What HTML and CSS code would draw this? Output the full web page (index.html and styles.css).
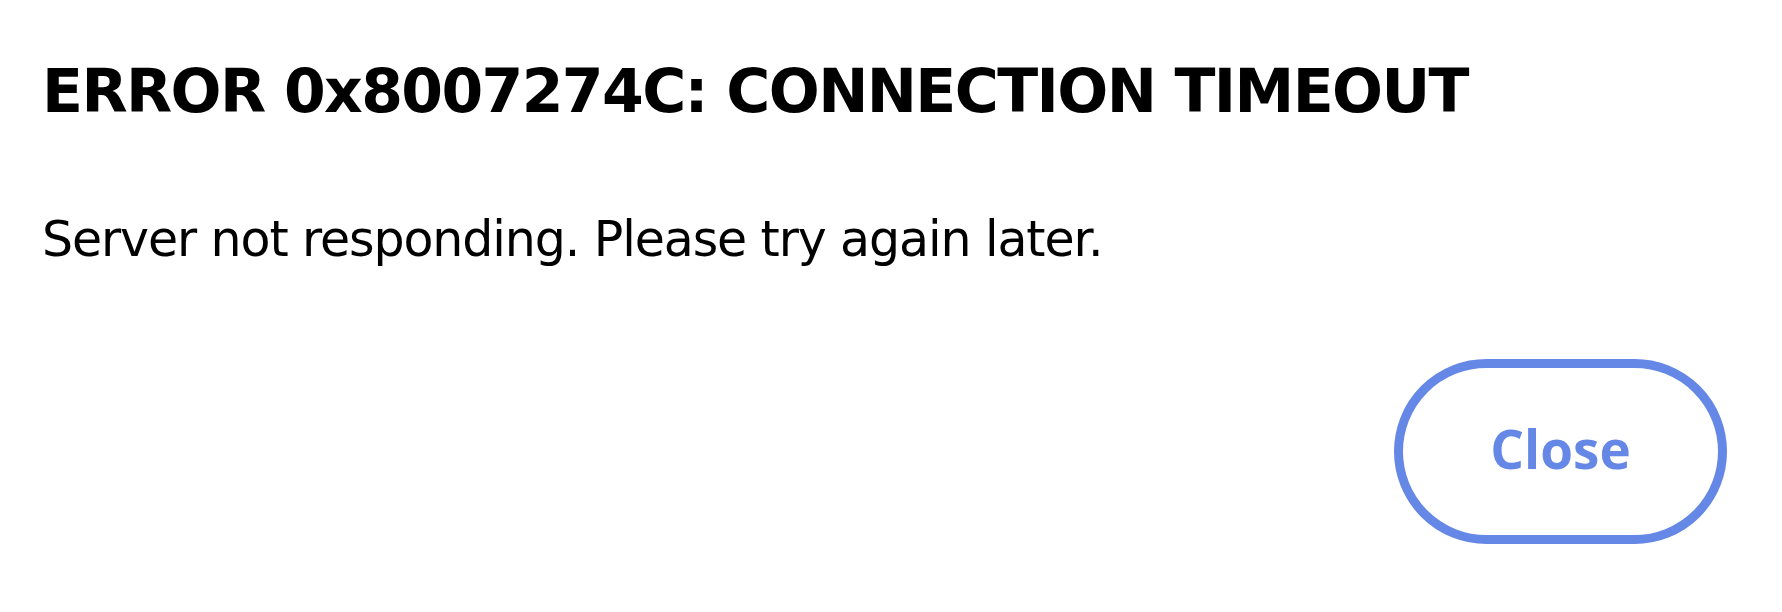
FILE: index.html
```html
<!DOCTYPE html>
<html lang="en">

<head>
  <meta charset="UTF-8">
  <meta name="viewport" content="width=device-width, initial-scale=1.0">
  <title>Connection Timeout</title>
  <link rel="stylesheet" href="styles.css">
</head>

<body>
  <div class="dialog">
    <h1 class="dialog-title">ERROR 0x8007274C: CONNECTION TIMEOUT</h1>
    <p class="dialog-message">Server not responding. Please try again later.</p>
    <div class="dialog-actions">
      <button type="button" class="close-btn">Close</button>
    </div>
  </div>
</body>

</html>
```

FILE: styles.css
```css
body {
  margin: 0;
  padding: 0;
  background: #fff;
  color: #000;
  font-family: "DejaVu Sans", Verdana, sans-serif;
}

.dialog {
  padding: 55px 55px 0 42px;
  display: flex;
  flex-direction: column;
}

.dialog-title {
  margin: 0;
  font-size: 60px;
  line-height: 72px;
  font-weight: bold;
  letter-spacing: -1.6px;
}

.dialog-message {
  margin: 84px 0 0;
  font-size: 49px;
  line-height: 58px;
  letter-spacing: -1.1px;
}

.dialog-actions {
  margin-top: 90px;
  display: flex;
  justify-content: flex-end;
}

.close-btn {
  box-sizing: border-box;
  width: 333px;
  height: 185px;
  padding: 0 0 6px;
  border: 9px solid #6587e6;
  border-radius: 999px;
  background: #fff;
  color: #6587e6;
  font-family: "Open Sans", "Noto Sans", sans-serif;
  font-size: 53px;
  font-weight: bold;
  cursor: pointer;
}
```
